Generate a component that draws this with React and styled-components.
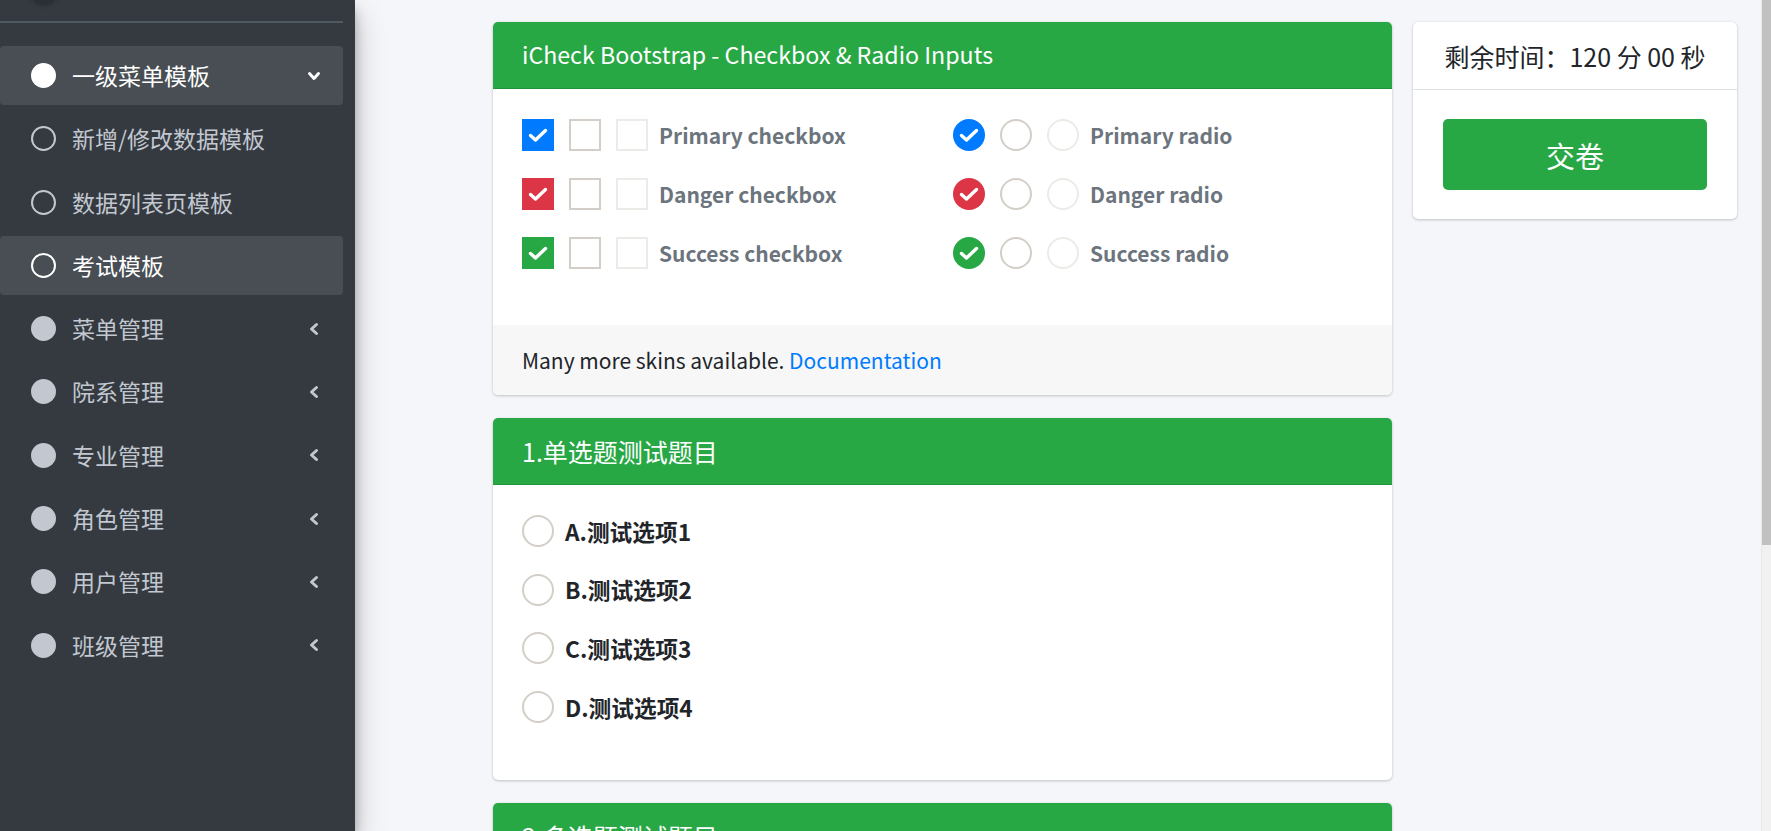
import React from "react";
import styled, { createGlobalStyle } from "styled-components";

const GlobalStyle = createGlobalStyle`
  html, body {
    margin: 0;
    padding: 0;
    height: 100%;
    overflow: hidden;
  }
  body {
    font-family: "Noto Sans CJK SC", "Noto Sans", sans-serif;
    color: #212529;
    background: #f4f6f9;
  }
  * {
    box-sizing: border-box;
  }
`;

const menu = [
  { label: "一级菜单模板", kind: "parent", open: true },
  { label: "新增/修改数据模板", kind: "child" },
  { label: "数据列表页模板", kind: "child" },
  { label: "考试模板", kind: "child", active: true },
  { label: "菜单管理", kind: "group" },
  { label: "院系管理", kind: "group" },
  { label: "专业管理", kind: "group" },
  { label: "角色管理", kind: "group" },
  { label: "用户管理", kind: "group" },
  { label: "班级管理", kind: "group" },
];

const skins = [
  { name: "Primary", color: "#007bff" },
  { name: "Danger", color: "#dc3545" },
  { name: "Success", color: "#28a745" },
];

const options = ["A.测试选项1", "B.测试选项2", "C.测试选项3", "D.测试选项4"];

function Check() {
  return (
    <svg width="32" height="32" viewBox="0 0 32 32">
      <path
        d="M8.5 16.5 L13.5 21 L23.5 11.5"
        fill="none"
        stroke="#fff"
        strokeWidth="3.4"
        strokeLinecap="round"
        strokeLinejoin="round"
      />
    </svg>
  );
}

function Chevron({ down }) {
  return (
    <ChevronIcon viewBox="0 0 14 14" $down={down}>
      <path
        d="M9.5 2.5 L4.5 7 L9.5 11.5"
        fill="none"
        stroke="currentColor"
        strokeWidth="3"
        strokeLinecap="round"
        strokeLinejoin="round"
      />
    </ChevronIcon>
  );
}

function Toggle({ round, color, state }) {
  return (
    <Box $round={round} $color={color} $state={state}>
      {state === "checked" && <Check />}
    </Box>
  );
}

function App() {
  return (
    <>
      <GlobalStyle />
      <Page>
        <Sidebar>
          <UserPanel>
            <Avatar />
          </UserPanel>
          <Nav>
            {menu.map((item) => (
              <NavItem
                key={item.label}
                $highlight={item.open || item.active}
                $bright={item.open || item.active}
              >
                <Dot $ring={item.kind === "child"} />
                <NavText>{item.label}</NavText>
                {item.kind !== "child" && <Chevron down={item.open} />}
              </NavItem>
            ))}
          </Nav>
        </Sidebar>

        <Main>
          <Column>
            <Card>
              <CardHeader>
                <CardTitle $latin>iCheck Bootstrap - Checkbox &amp; Radio Inputs</CardTitle>
              </CardHeader>
              <DemoBody>
                <Group>
                  {skins.map((s) => (
                    <Row key={s.name}>
                      <Toggle color={s.color} state="checked" />
                      <Toggle state="empty" />
                      <Toggle state="disabled" />
                      <Label>{s.name} checkbox</Label>
                    </Row>
                  ))}
                </Group>
                <Group>
                  {skins.map((s) => (
                    <Row key={s.name}>
                      <Toggle round color={s.color} state="checked" />
                      <Toggle round state="empty" />
                      <Toggle round state="disabled" />
                      <Label>{s.name} radio</Label>
                    </Row>
                  ))}
                </Group>
              </DemoBody>
              <CardFooter>
                Many more skins available. <Link href="#">Documentation</Link>
              </CardFooter>
            </Card>

            <Card>
              <CardHeader>
                <CardTitle>1.单选题测试题目</CardTitle>
              </CardHeader>
              <QuestionBody>
                {options.map((o) => (
                  <Row key={o}>
                    <Toggle round state="empty" />
                    <Option>{o}</Option>
                  </Row>
                ))}
              </QuestionBody>
            </Card>

            <Card>
              <CardHeader>
                <CardTitle>2.多选题测试题目</CardTitle>
              </CardHeader>
              <QuestionBody />
            </Card>
          </Column>

          <Aside>
            <TimerCard>
              <TimerHead>剩余时间：120 分 00 秒</TimerHead>
              <TimerBody>
                <SubmitButton>交卷</SubmitButton>
              </TimerBody>
            </TimerCard>
          </Aside>
        </Main>

        <ScrollTrack>
          <ScrollThumb />
        </ScrollTrack>
      </Page>
    </>
  );
}

export default App;

const Page = styled.div`
  display: flex;
  height: 100vh;
  overflow: hidden;
`;

const Sidebar = styled.aside`
  width: 355px;
  flex: none;
  background: #343a40;
  box-shadow: 0 14px 28px rgba(0, 0, 0, 0.25), 0 10px 10px rgba(0, 0, 0, 0.22);
  z-index: 2;
  padding-right: 12px;
`;

const UserPanel = styled.div`
  display: flex;
  align-items: flex-start;
  height: 23px;
  border-bottom: 2px solid #4f5962;
  padding-left: 30px;
  margin-bottom: 23px;
  overflow: hidden;
`;

const Avatar = styled.div`
  width: 28px;
  height: 28px;
  margin-top: -25px;
  border-radius: 50%;
  background: #2c3035;
  box-shadow: 0 2px 5px rgba(0, 0, 0, 0.3);
`;

const Nav = styled.ul`
  list-style: none;
  margin: 0;
  padding: 0;
  display: flex;
  flex-direction: column;
  gap: 4.3px;
`;

const NavItem = styled.li`
  height: 59px;
  display: flex;
  align-items: center;
  padding: 0 22px 0 31px;
  border-radius: 4px;
  background: ${(p) => (p.$highlight ? "rgba(255, 255, 255, 0.1)" : "transparent")};
  color: ${(p) => (p.$bright ? "#fff" : "#c2c7d0")};
`;

const Dot = styled.span`
  width: 25px;
  height: 25px;
  flex: none;
  border-radius: 50%;
  background: ${(p) => (p.$ring ? "transparent" : "currentColor")};
  border: ${(p) => (p.$ring ? "2.6px solid currentColor" : "none")};
  margin-right: 16px;
`;

const NavText = styled.span`
  flex: 1;
  font-size: 23px;
  line-height: 1;
  white-space: nowrap;
`;

const ChevronIcon = styled.svg`
  width: 14px;
  height: 14px;
  flex: none;
  transform: ${(p) => (p.$down ? "rotate(-90deg)" : "none")};
`;

const Main = styled.main`
  flex: 1;
  min-width: 0;
  display: grid;
  grid-template-columns: 899px 324px;
  column-gap: 21px;
  align-items: start;
  padding: 22px 24px 0 138px;
  overflow: hidden;
`;

const Column = styled.div`
  display: flex;
  flex-direction: column;
  gap: 23px;
`;

const Aside = styled.div``;

const Card = styled.section`
  background: #fff;
  border-radius: 5px;
  box-shadow: 0 0 1px rgba(0, 0, 0, 0.125), 0 1px 3px rgba(0, 0, 0, 0.2);
  overflow: hidden;
`;

const CardHeader = styled.header`
  height: 67px;
  display: flex;
  align-items: center;
  padding: 0 29px;
  background: #28a745;
  border-bottom: 1px solid rgba(0, 0, 0, 0.125);
`;

const CardTitle = styled.h3`
  margin: 0;
  font-size: ${(p) => (p.$latin ? "23.2px" : "25px")};
  font-weight: 400;
  color: #fff;
  line-height: 1.2;
  white-space: nowrap;
`;

const DemoBody = styled.div`
  display: grid;
  grid-template-columns: 431px 1fr;
  padding: 30px 29px 56px;
`;

const Group = styled.div`
  display: flex;
  flex-direction: column;
  gap: 27px;
`;

const Row = styled.div`
  display: flex;
  align-items: center;
  gap: 15px;
  height: 32px;
`;

const Box = styled.span`
  width: 32px;
  height: 32px;
  flex: none;
  display: inline-flex;
  align-items: center;
  justify-content: center;
  border-radius: ${(p) => (p.$round ? "50%" : "0")};
  background: ${(p) => (p.$state === "checked" ? p.$color : "#fff")};
  border: ${(p) =>
    p.$state === "checked"
      ? "none"
      : p.$state === "disabled"
      ? "2px solid #edebe8"
      : "2px solid #d3cfc8"};
`;

const Label = styled.span`
  margin-left: -4px;
  font-size: 21px;
  font-weight: 700;
  color: #6c757d;
  white-space: nowrap;
`;

const Option = styled.span`
  margin-left: -4px;
  font-size: 22.7px;
  font-weight: 700;
  color: #212529;
  white-space: nowrap;
`;

const CardFooter = styled.footer`
  height: 70px;
  display: flex;
  align-items: center;
  padding: 0 29px;
  background: #f7f7f7;
  font-size: 21px;
  color: #212529;
  white-space: pre;
`;

const Link = styled.a`
  color: #007bff;
  text-decoration: none;
`;

const QuestionBody = styled.div`
  display: flex;
  flex-direction: column;
  gap: 26.7px;
  padding: 30px 29px 57px;
  min-height: 120px;
`;

const TimerCard = styled(Card)``;

const TimerHead = styled.div`
  height: 68px;
  display: flex;
  align-items: center;
  justify-content: center;
  border-bottom: 1px solid #dee2e6;
  font-size: 25px;
  color: #212529;
  white-space: nowrap;
`;

const TimerBody = styled.div`
  padding: 29px 30px;
`;

const SubmitButton = styled.button`
  width: 100%;
  height: 71px;
  border: none;
  border-radius: 5px;
  background: #28a745;
  color: #fff;
  font-family: inherit;
  font-size: 29px;
  cursor: pointer;
`;

const ScrollTrack = styled.div`
  width: 10px;
  flex: none;
  background: #f1f1f1;
  border-left: 1px solid #e8e8e8;
`;

const ScrollThumb = styled.div`
  height: 545px;
  background: #c1c1c1;
`;
